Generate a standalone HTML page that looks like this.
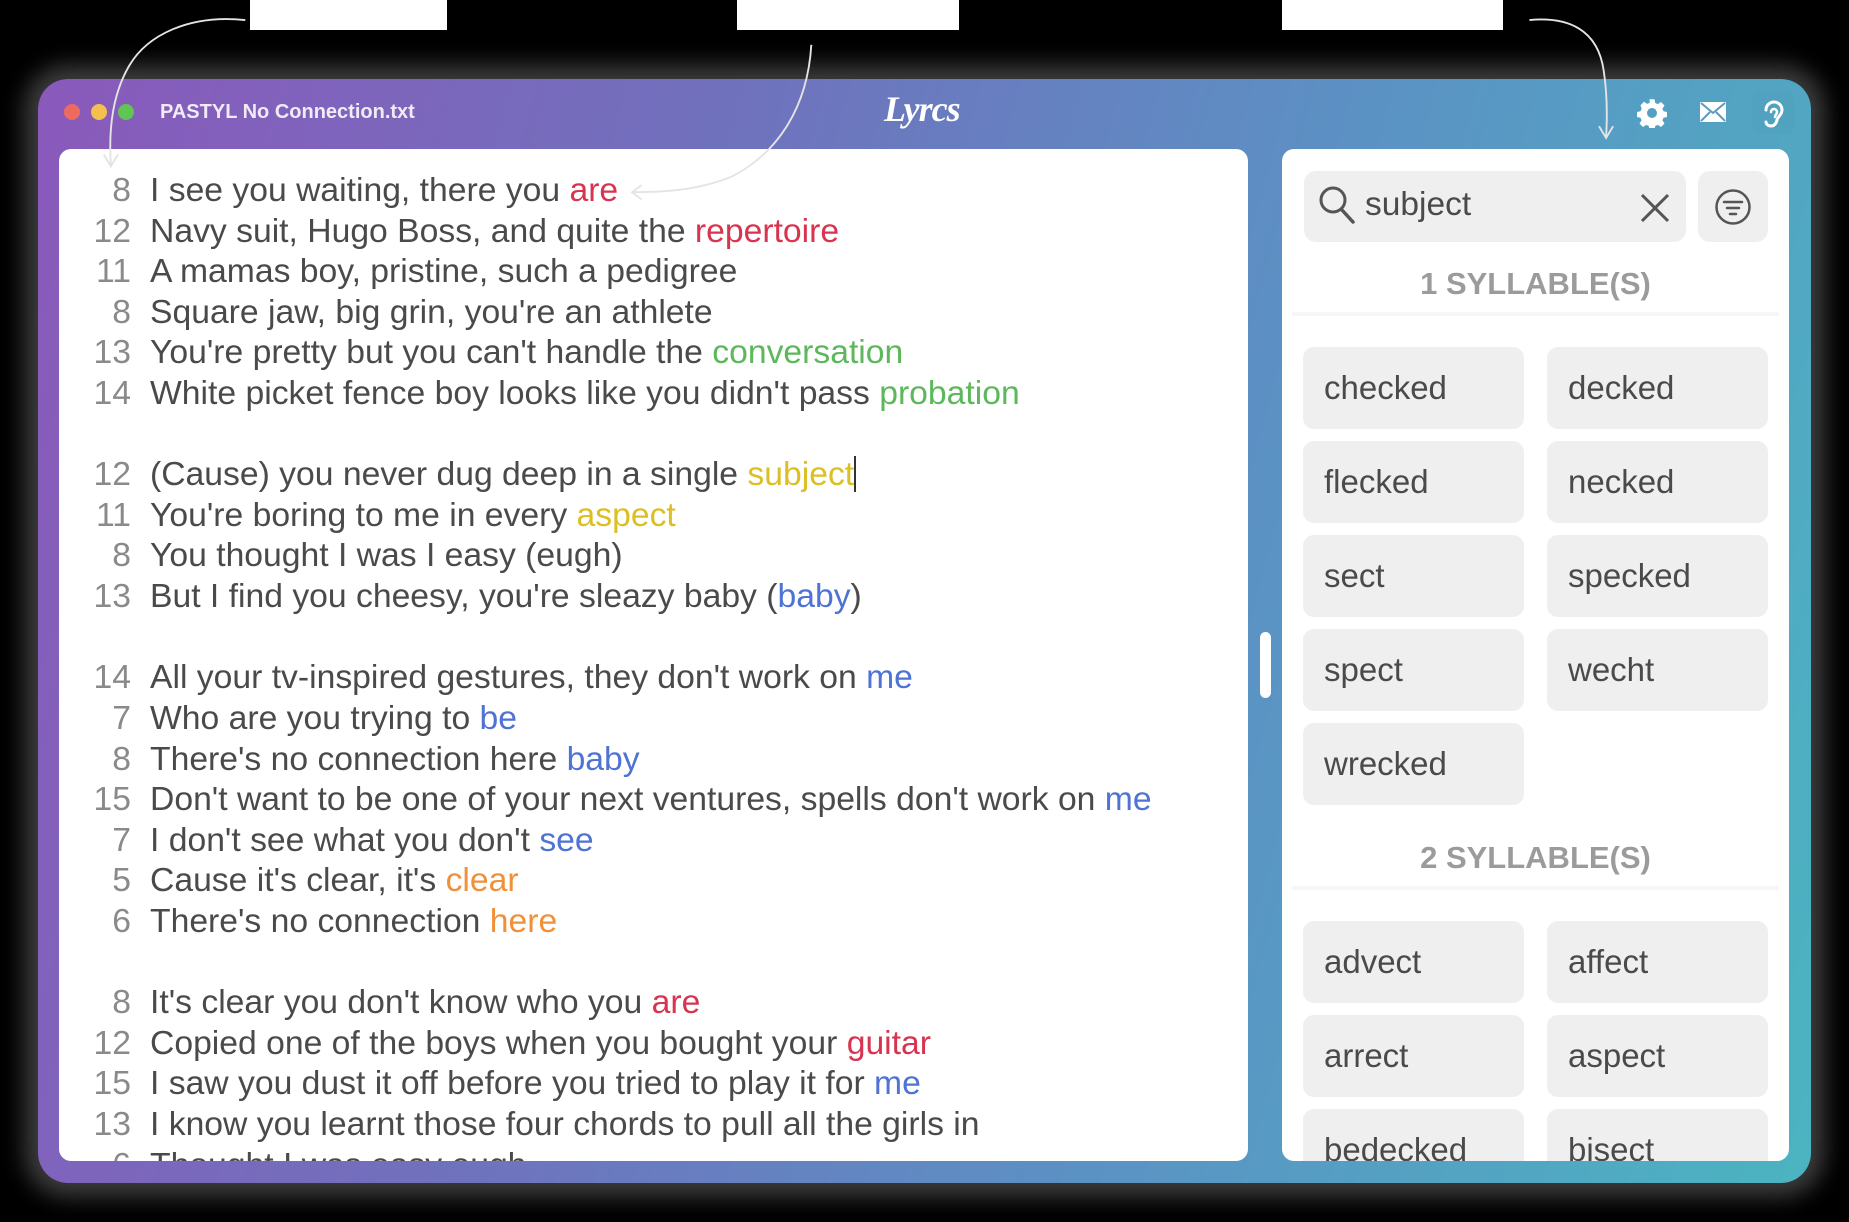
<!DOCTYPE html>
<html><head><meta charset="utf-8"><style>
*{margin:0;padding:0;box-sizing:border-box}
body{width:1849px;height:1222px;background:#000;position:relative;overflow:hidden;font-family:"Liberation Sans",sans-serif}
.win{position:absolute;left:38px;top:79px;width:1773px;height:1104px;border-radius:30px;
background:linear-gradient(105deg,#8a59bb 0%,#6f72bd 35%,#5b92c4 65%,#4bb4c1 100%);
box-shadow:0 0 22px 14px rgba(110,110,110,.55)}
.lbox{position:absolute;top:0;height:30px;background:#fff}
.tl{position:absolute;top:104px;width:16px;height:16px;border-radius:50%}
.title{position:absolute;left:160px;top:101px;color:#f1eaf7;font-size:20px;font-weight:bold}
.logo{position:absolute;left:884px;top:88px;color:#fff;font-family:"Liberation Serif",serif;font-style:italic;font-weight:bold;font-size:36px;letter-spacing:-1px}
.ed{position:absolute;left:59px;top:149px;width:1189px;height:1012px;background:#fff;border-radius:12px;overflow:hidden;padding-top:21px}
.ln{height:40.62px;line-height:40.62px;font-size:33.7px;color:#4a4a4a;white-space:pre;position:relative}
.ln b{font-weight:normal;display:inline-block;width:72px;text-align:right;color:#8a8a8a;margin-right:19px}
.r{color:#d8344f}.g{color:#5cb85b}.y{color:#dcbf22}.bl{color:#4f73d5}.o{color:#f0913a}
.sb{position:absolute;left:1282px;top:149px;width:507px;height:1012px;background:#fff;border-radius:12px;overflow:hidden}
.search{position:absolute;left:22px;top:22px;width:382px;height:71px;background:#efefef;border-radius:12px}
.filt{position:absolute;left:416px;top:22px;width:70px;height:71px;background:#efefef;border-radius:12px}
.hd{position:absolute;left:0;width:507px;text-align:center;font-size:31px;font-weight:bold;color:#9b9b9b}
.dv{position:absolute;left:10px;width:487px;height:4px;background:#f6f6f6}
.chip{position:absolute;width:221px;height:82px;background:#efefef;border-radius:11px;font-size:33px;color:#4a4a4a;line-height:82px;padding-left:21px}
.handle{position:absolute;left:1260px;top:632px;width:11px;height:66px;background:#fff;border-radius:6px}
</style></head><body>
<div class="lbox" style="left:250px;width:197px"></div>
<div class="lbox" style="left:737px;width:222px"></div>
<div class="lbox" style="left:1282px;width:221px"></div>
<div class="win"></div>
<div class="tl" style="left:64px;background:#ec6a5e"></div>
<div class="tl" style="left:91px;background:#f4bf4f"></div>
<div class="tl" style="left:118px;background:#61c554"></div>
<div class="title">PASTYL No Connection.txt</div>
<div class="logo">Lyrcs</div>
<svg style="position:absolute;left:1637px;top:98px" width="30" height="30" viewBox="0 0 24 24"><path fill="#fff" d="M10 1h4l.6 3 2 .9 2.6-1.7 2.8 2.8-1.7 2.6.9 2 3 .6v4l-3 .6-.9 2 1.7 2.6-2.8 2.8-2.6-1.7-2 .9-.6 3h-4l-.6-3-2-.9-2.6 1.7-2.8-2.8 1.7-2.6-.9-2-3-.6v-4l3-.6.9-2L2.8 5.8 5.6 3l2.6 1.7 2-.9z M12 8a4 4 0 100 8 4 4 0 000-8z" fill-rule="evenodd"/></svg>
<svg style="position:absolute;left:1699px;top:101px" width="28" height="22" viewBox="0 0 28 22"><rect x="1" y="1" width="26" height="20" rx="1" fill="#fff"/><path d="M2 2l12 10 12-10M2 20l9-9M26 20l-9-9" stroke="#5b9ac2" stroke-width="2" fill="none"/></svg>
<div style="position:absolute;left:1752px;top:92px;width:42px;height:42px;border-radius:8px;background:rgba(80,150,180,.2)"></div>
<svg style="position:absolute;left:1762px;top:98px" width="22" height="30" viewBox="0 0 22 30"><path d="M4 12a8 8 0 0116 0c0 5-4 6-5 10-1 4-3 6-6 6S4 26 4 24" stroke="#fff" stroke-width="3" fill="none" stroke-linecap="round"/><path d="M9 14a3 3 0 016 0c0 2-2 3-2 5" stroke="#fff" stroke-width="2.5" fill="none" stroke-linecap="round"/></svg>

<div class="ed">
<div class="ln"><b>8</b>I see you waiting, there you <span class="r">are</span></div>
<div class="ln"><b>12</b>Navy suit, Hugo Boss, and quite the <span class="r">repertoire</span></div>
<div class="ln"><b>11</b>A mamas boy, pristine, such a pedigree</div>
<div class="ln"><b>8</b>Square jaw, big grin, you're an athlete</div>
<div class="ln"><b>13</b>You're pretty but you can't handle the <span class="g">conversation</span></div>
<div class="ln"><b>14</b>White picket fence boy looks like you didn't pass <span class="g">probation</span></div>
<div class="ln"></div>
<div class="ln"><b>12</b>(Cause) you never dug deep in a single <span class="y">subject</span><span style="display:inline-block;width:2px;height:36px;background:#333;vertical-align:-7px"></span></div>
<div class="ln"><b>11</b>You're boring to me in every <span class="y">aspect</span></div>
<div class="ln"><b>8</b>You thought I was I easy (eugh)</div>
<div class="ln"><b>13</b>But I find you cheesy, you're sleazy baby (<span class="bl">baby</span>)</div>
<div class="ln"></div>
<div class="ln"><b>14</b>All your tv-inspired gestures, they don't work on <span class="bl">me</span></div>
<div class="ln"><b>7</b>Who are you trying to <span class="bl">be</span></div>
<div class="ln"><b>8</b>There's no connection here <span class="bl">baby</span></div>
<div class="ln"><b>15</b>Don't want to be one of your next ventures, spells don't work on <span class="bl">me</span></div>
<div class="ln"><b>7</b>I don't see what you don't <span class="bl">see</span></div>
<div class="ln"><b>5</b>Cause it's clear, it's <span class="o">clear</span></div>
<div class="ln"><b>6</b>There's no connection <span class="o">here</span></div>
<div class="ln"></div>
<div class="ln"><b>8</b>It's clear you don't know who you <span class="r">are</span></div>
<div class="ln"><b>12</b>Copied one of the boys when you bought your <span class="r">guitar</span></div>
<div class="ln"><b>15</b>I saw you dust it off before you tried to play it for <span class="bl">me</span></div>
<div class="ln"><b>13</b>I know you learnt those four chords to pull all the girls in</div>
<div class="ln"><b>6</b>Thought I was easy eugh</div>
</div>
<div class="handle"></div>

<div class="sb">
<div class="search">
<svg style="position:absolute;left:14px;top:14px" width="38" height="40" viewBox="0 0 38 40"><circle cx="15" cy="15" r="12" stroke="#555" stroke-width="3" fill="none"/><path d="M24 25l11 12" stroke="#555" stroke-width="3.5" stroke-linecap="round"/></svg>
<div style="position:absolute;left:61px;top:14px;font-size:33.5px;color:#4a4a4a;line-height:40px">subject</div>
<svg style="position:absolute;left:336px;top:22px" width="30" height="30" viewBox="0 0 30 30"><path d="M2 2l26 26M28 2L2 28" stroke="#555" stroke-width="3"/></svg>
</div>
<div class="filt"><svg style="position:absolute;left:16px;top:17px" width="38" height="38" viewBox="0 0 38 38"><circle cx="19" cy="19" r="16.5" stroke="#555" stroke-width="2.5" fill="none"/><path d="M10 14h18M13 20h12M16 26h6" stroke="#555" stroke-width="2.5" stroke-linecap="round"/></svg></div>
<div class="hd" style="top:117px">1 SYLLABLE(S)</div>
<div class="dv" style="top:163px"></div>
<div class="chip" style="left:21px;top:198px">checked</div><div class="chip" style="left:265px;top:198px">decked</div>
<div class="chip" style="left:21px;top:292px">flecked</div><div class="chip" style="left:265px;top:292px">necked</div>
<div class="chip" style="left:21px;top:386px">sect</div><div class="chip" style="left:265px;top:386px">specked</div>
<div class="chip" style="left:21px;top:480px">spect</div><div class="chip" style="left:265px;top:480px">wecht</div>
<div class="chip" style="left:21px;top:574px">wrecked</div>
<div class="hd" style="top:691px">2 SYLLABLE(S)</div>
<div class="dv" style="top:737px"></div>
<div class="chip" style="left:21px;top:772px">advect</div><div class="chip" style="left:265px;top:772px">affect</div>
<div class="chip" style="left:21px;top:866px">arrect</div><div class="chip" style="left:265px;top:866px">aspect</div>
<div class="chip" style="left:21px;top:960px">bedecked</div><div class="chip" style="left:265px;top:960px">bisect</div>
</div>

<svg style="position:absolute;left:0;top:0" width="1849" height="1222" viewBox="0 0 1568 1036.3" fill="none" stroke="#e4e4e4" stroke-width="1.6">
<path d="M208 17C160 12 125 30 110 55 95 80 92 110 94 140"/><path d="M88 131l6 10 6-10"/>
<path d="M688 38C685 90 660 130 620 150 590 162 560 163 536 163"/><path d="M544 157l-8 6 8 6"/>
<path d="M1297 17C1330 14 1355 25 1360 60 1363 80 1363 100 1362 116"/><path d="M1356 107l6 10 6-10"/>
</svg>
</body></html>
